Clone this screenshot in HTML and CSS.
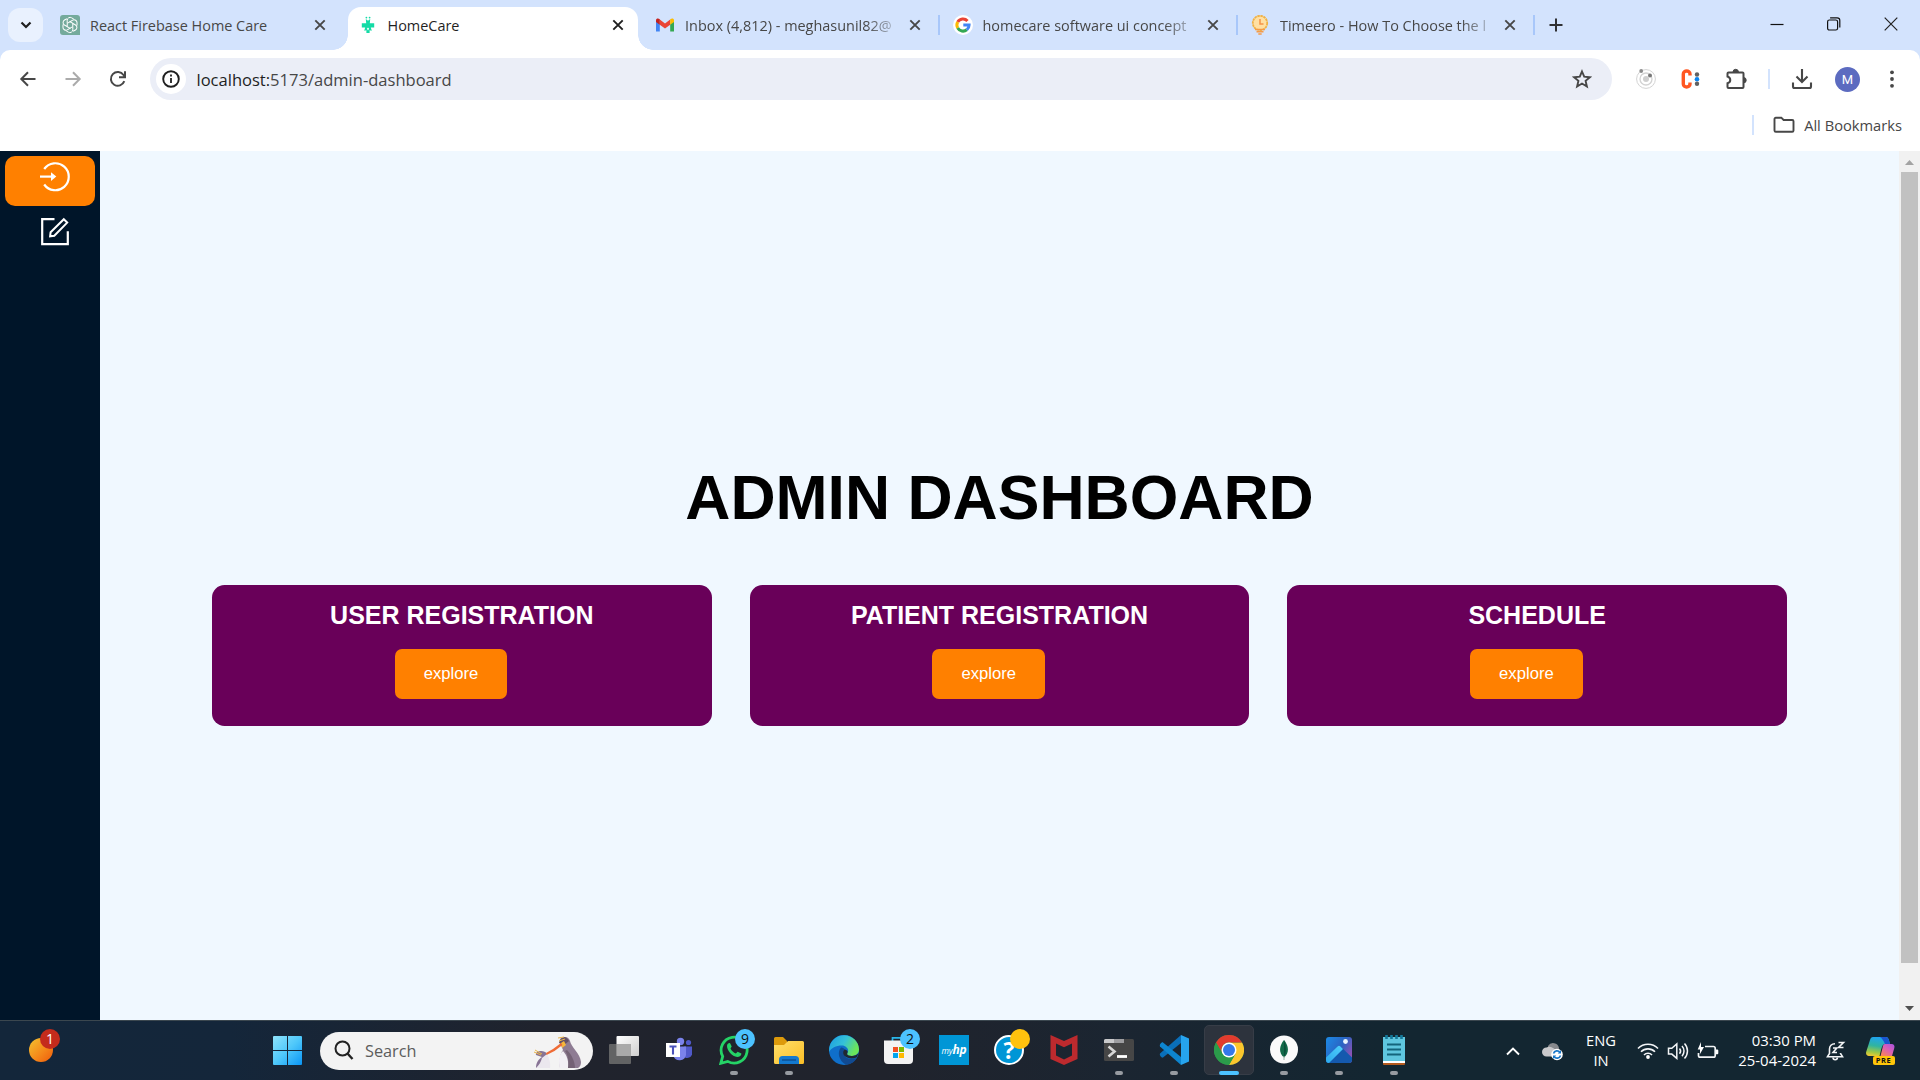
FILE: index.html
```html
<!DOCTYPE html>
<html lang="en">
<head>
<meta charset="utf-8">
<title>HomeCare</title>
<link rel="stylesheet" href="styles.css">
</head>
<body>
<svg class="defs" width="0" height="0">
  <defs>
    <symbol id="close" viewBox="0 0 20 20"><path d="M5.3 5.3l9.4 9.4M14.7 5.3l-9.4 9.4" stroke="currentColor" stroke-width="1.9" fill="none"/></symbol>
    <path id="petal" d="M10 6.800L7.200 8.400V5.200a2.900 2.900 0 0 1 4.400-2.400l2.300 1.400"/>
  </defs>
</svg>

<header class="tabstrip">
  <button class="tab-search"><svg width="12" height="12" viewBox="0 0 12 12"><path d="M1.5 3.5L6 8l4.500-4.500" fill="none" stroke="#1f1f1f" stroke-width="2.200"/></svg></button>
  <div class="tab">
    <svg class="favicon" viewBox="0 0 20 20"><path d="M3 0h14a3 3 0 0 1 3 3v17H3a3 3 0 0 1-3-3V3a3 3 0 0 1 3-3z" fill="#74aa9c"/><g fill="none" stroke="#fff" stroke-width="1"><use href="#petal"/><use href="#petal" transform="rotate(60 10 10)"/><use href="#petal" transform="rotate(120 10 10)"/><use href="#petal" transform="rotate(180 10 10)"/><use href="#petal" transform="rotate(240 10 10)"/><use href="#petal" transform="rotate(300 10 10)"/></g></svg>
    <span class="tab-title">React Firebase Home Care</span>
    <svg class="tab-close"><use href="#close"/></svg>
  </div>
  <div class="tab active">
    <svg class="favicon" viewBox="0 0 20 20"><g fill="#14dba6"><path d="M7.800 4L10 5.800 12.200 4l-.4 4.300h4.400v4.300h-3.400l1 3.100-2.200-.5v2.800H8.400v-2.800l-2.200.5 1-3.100H3.800V8.300h4.400z"/><circle cx="8.400" cy="2.600" r=".9"/><circle cx="11.600" cy="2.600" r=".9"/></g><path d="M10 12.500l1.100 1.300-1.100 1.700-1.100-1.700z" fill="#fff"/></svg>
    <span class="tab-title">HomeCare</span>
    <svg class="tab-close"><use href="#close"/></svg>
  </div>
  <div class="tab divided">
    <svg class="favicon" viewBox="0 0 20 20"><path d="M1 5v11.500h3.800V9z" fill="#4285f4"/><path d="M19 5v11.500h-3.800V9z" fill="#34a853"/><path d="M4.800 4.500L10 8.500l5.200-4v5.200L10 13.600 4.800 9.700z" fill="#ea4335"/><path d="M1 5.500C1 3.200 3.300 3 4.800 4.300v5.500L1 7z" fill="#c5221f"/><path d="M19 5.500c0-2.300-2.300-2.500-3.800-1.200v5.500L19 7z" fill="#fbbc04"/></svg>
    <span class="tab-title faded">Inbox (4,812) - meghasunil82@</span>
    <svg class="tab-close"><use href="#close"/></svg>
  </div>
  <div class="tab divided">
    <svg class="favicon" viewBox="0 0 20 20"><circle cx="10" cy="10" r="10" fill="#fff"/><g fill="none" stroke-width="3"><path d="M14.500 5.900A6.100 6.100 0 0 0 4.700 7" stroke="#ea4335"/><path d="M4.700 7a6.100 6.100 0 0 0 0 6" stroke="#fbbc05"/><path d="M4.700 13a6.100 6.100 0 0 0 9.100 1.800" stroke="#34a853"/><path d="M13.800 14.800A6.100 6.100 0 0 0 16.100 10H10.300" stroke="#4285f4"/></g></svg>
    <span class="tab-title faded">homecare software ui concept</span>
    <svg class="tab-close"><use href="#close"/></svg>
  </div>
  <div class="tab divided">
    <svg class="favicon" viewBox="0 0 20 20"><circle cx="10" cy="8" r="7.200" fill="#ffe0a3" stroke="#f0b145" stroke-width="1.800" stroke-dasharray="2.500 .6"/><path d="M10 4v5h3.500" fill="none" stroke="#f5924a" stroke-width="1.500"/><path d="M5 14.500h10M6.500 16.700h7M8.300 19h3.400" stroke="#f59b48" stroke-width="1.400"/></svg>
    <span class="tab-title faded">Timeero - How To Choose the l</span>
    <svg class="tab-close"><use href="#close"/></svg>
  </div>
  <svg class="new-tab" width="16" height="16" viewBox="0 0 16 16"><path d="M8 1.500v13M1.500 8h13" stroke="#303134" stroke-width="2"/></svg>
  <div class="window-controls">
    <svg width="14" height="14" viewBox="0 0 14 14"><path d="M.5 7.500h13" stroke="#111" stroke-width="1.200"/></svg>
    <svg width="14" height="14" viewBox="0 0 14 14"><g fill="none" stroke="#111" stroke-width="1.200"><rect x=".6" y="3" width="10" height="10" rx="1.800"/><path d="M3.100.8h7a2.700 2.700 0 0 1 2.700 2.700v7"/></g></svg>
    <svg width="14" height="14" viewBox="0 0 14 14"><path d="M.7.700l12.600 12.600M13.300.700L.7 13.300" stroke="#222" stroke-width="1.200"/></svg>
  </div>
</header>

<section class="browser-bars">
  <div class="toolbar">
    <nav class="history">
      <svg width="20" height="20" viewBox="0 0 20 20"><path d="M17.500 10H3.500M10 3.200L3.300 10l6.700 6.800" fill="none" stroke="#474747" stroke-width="2"/></svg>
      <svg width="20" height="20" viewBox="0 0 20 20"><path d="M2.500 10h14M10 3.200l6.700 6.800-6.700 6.800" fill="none" stroke="#ababab" stroke-width="2"/></svg>
      <svg width="20" height="20" viewBox="0 0 20 20"><path d="M16.300 12.200A6.900 6.900 0 1 1 15.500 6L17 7.800M17 2.200v6h-6" fill="none" stroke="#474747" stroke-width="2"/></svg>
    </nav>
    <div class="omnibox">
      <span class="site-info"><svg width="18" height="18" viewBox="0 0 18 18"><circle cx="9" cy="9" r="7.800" fill="none" stroke="#1f1f1f" stroke-width="1.900"/><path d="M9 4.500v2M9 8v5" stroke="#1f1f1f" stroke-width="1.800"/></svg></span>
      <span class="url"><b>localhost:</b>5173/admin-dashboard</span>
      <svg class="star" width="20" height="20" viewBox="0 0 20 20"><path d="M10 2.500l2.200 5.200 5.700.5-4.300 3.700 1.300 5.600L10 14.500l-4.900 3 1.300-5.600-4.300-3.700 5.700-.5z" fill="none" stroke="#474747" stroke-width="1.900"/></svg>
    </div>
    <div class="extensions">
      <svg width="20" height="20" viewBox="0 0 20 20"><g fill="none" stroke="#d3d3d3"><circle cx="10" cy="10" r="9.400"/><circle cx="10" cy="10" r="6" stroke-width="1.300"/></g><circle cx="10" cy="10" r="3" fill="#cfcfcf"/><circle cx="5.200" cy="2" r="1.900" fill="#8b8b8b"/><circle cx="14" cy="6.500" r="2" fill="#777"/></svg>
      <svg width="20" height="20" viewBox="0 0 20 20"><path d="M10 6.500V5c0-4-6.700-4-6.700 0v10c0 4 6.700 4 6.700 0v-1.500" fill="none" stroke="#ff5722" stroke-width="3.400"/><circle cx="17" cy="5.500" r="2.200" fill="#616161"/><circle cx="17" cy="10.200" r="2.300" fill="#0a84f0"/><circle cx="17" cy="14.700" r="2.200" fill="#616161"/></svg>
      <svg width="22" height="22" viewBox="0 0 22 22"><path d="M3.500 4.500h14a1 1 0 0 1 1 1v13.500a1 1 0 0 1-1 1h-14a1 1 0 0 1-1-1v-3.700c3.700-1.300 3.700-5.500 0-6.800v-3a1 1 0 0 1 1-1z" fill="none" stroke="#474747" stroke-width="2"/><path d="M8 4a2.700 2.700 0 0 1 5.400 0zM18.500 9.500a2.700 2.700 0 0 1 0 5.400z" fill="#474747" stroke="#474747"/></svg>
      <i class="bar-divider"></i>
      <svg width="22" height="22" viewBox="0 0 22 22"><path d="M11 1v13M5.500 8.500L11 14l5.500-5.500M2 14.500v4a1.500 1.500 0 0 0 1.500 1.500h15a1.500 1.500 0 0 0 1.500-1.500v-4" fill="none" stroke="#474747" stroke-width="2.100"/></svg>
      <span class="avatar">M</span>
      <svg width="20" height="20" viewBox="0 0 20 20" fill="#474747"><circle cx="10" cy="3.300" r="1.900"/><circle cx="10" cy="10" r="1.900"/><circle cx="10" cy="16.800" r="1.900"/></svg>
    </div>
  </div>
  <div class="bookmarks">
    <i class="bar-divider"></i>
    <svg width="22" height="18" viewBox="0 0 22 18"><path d="M1.500 3a1.300 1.300 0 0 1 1.300-1.300h5.500l2.300 2.300h8.600A1.300 1.300 0 0 1 20.500 5.300v9.200a1.300 1.300 0 0 1-1.300 1.300H2.800a1.300 1.300 0 0 1-1.300-1.300z" fill="none" stroke="#474747" stroke-width="1.900"/></svg>
    <span>All Bookmarks</span>
  </div>
</section>

<div class="page">
  <aside class="sidebar">
    <a class="side-item selected"><svg width="30" height="30" viewBox="0 0 30 30"><path d="M4.200 7A13.500 13.500 0 1 1 4.200 22.500" fill="none" stroke="#fff" stroke-width="2.200"/><path d="M0 14.600h12" stroke="#fff" stroke-width="2.200"/><path d="M11 10.300l5.300 4.300-5.300 4.300z" fill="#fff"/></svg></a>
    <a class="side-item"><svg width="30" height="30" viewBox="0 0 30 30"><path d="M14.500 2.200H2.200v25h25.600V14.200" fill="none" stroke="#fff" stroke-width="2.200"/><path d="M23.800 2.200l3.400 3.400L14.300 18.700l-4.200.6.500-4.100z" fill="none" stroke="#fff" stroke-width="2"/></svg></a>
  </aside>
  <main class="dashboard">
    <h1>ADMIN DASHBOARD</h1>
    <div class="cards">
      <section class="card"><h2>USER REGISTRATION</h2><button class="explore">explore</button></section>
      <section class="card"><h2>PATIENT REGISTRATION</h2><button class="explore">explore</button></section>
      <section class="card"><h2>SCHEDULE</h2><button class="explore">explore</button></section>
    </div>
  </main>
  <div class="scrollbar">
    <svg width="9" height="5" viewBox="0 0 9 5"><path d="M0 5l4.500-5L9 5z" fill="#a3a3a3"/></svg>
    <div class="thumb"></div>
    <svg width="9" height="5" viewBox="0 0 9 5"><path d="M0 0l4.500 5L9 0z" fill="#505050"/></svg>
  </div>
</div>

<footer class="taskbar">
  <div class="widgets">
    <svg width="24" height="24" viewBox="0 0 24 24"><defs><linearGradient id="sun" x1="0" y1="0" x2="1" y2="1"><stop offset="0" stop-color="#f2c230"/><stop offset=".55" stop-color="#f58a1a"/><stop offset="1" stop-color="#ee5a0c"/></linearGradient></defs><circle cx="12" cy="12" r="12" fill="url(#sun)"/></svg>
    <span class="badge red">1</span>
  </div>
  <svg class="start" width="29" height="29" viewBox="0 0 29 29"><defs><linearGradient id="win" x1="0" y1="0" x2="1" y2="1" ><stop offset="0" stop-color="#8fe3fb"/><stop offset=".5" stop-color="#4fc8fa"/><stop offset="1" stop-color="#0a95f5"/></linearGradient></defs><path d="M1 0h13v14H0V1a1 1 0 0 1 1-1zM15 0h13a1 1 0 0 1 1 1v13H15zM0 15h14v14H1a1 1 0 0 1-1-1zM15 15h14v13a1 1 0 0 1-1 1H15z" fill="url(#win)"/></svg>
  <div class="search">
    <svg width="20" height="20" viewBox="0 0 20 20"><circle cx="8.500" cy="8.500" r="7" fill="none" stroke="#222" stroke-width="2"/><path d="M13.500 13.500l5 5.500" stroke="#222" stroke-width="2.400"/></svg>
    <span>Search</span>
    <svg class="penguins" width="50" height="36" viewBox="0 0 50 36"><path d="M27 35c-1-8 0-14 3-18l-3-7c1-7 8-8 10-2 1 6 10 12 11 21 0 3-1 5-3 6z" fill="#8e7c93"/><path d="M27 35c-2-7-1-14 3-17 4 4 6 11 5 17z" fill="#f2eff5"/><path d="M34 17c5 5 8 12 8 18h-7c1-7 0-13-3-17z" fill="#746276"/><path d="M26 10c1-7 7-8 10-2l-5 4z" fill="#655267"/><path d="M28 10l3-2 2 4-4 3z" fill="#f5b83c"/><path d="M3 35c1-6 4-9 7-11l-7-2c0-4 8-6 11-1 2 4 4 9 3 14z" fill="#ebe7ee"/><path d="M3 35c0-6 3-9 6-11l-6-2c-1-4 8-6 11-1l-5 4c-1 4-3 7-6 10z" fill="#887495"/><path d="M13 20l7-4 8-6 1.500 2-8 6-8 4z" fill="#ef6b35"/><path d="M1 19l7 3M2 17l7 4" stroke="#ebb647"/><path d="M25 5l6-1M26 8l6-2" stroke="#e9b54b"/></svg>
  </div>
  <div class="apps">
    <div class="app"><svg width="30" height="30" viewBox="0 0 30 30"><defs><linearGradient id="tv" x1="0" y1="0" x2="1" y2="1"><stop offset="0" stop-color="#fff"/><stop offset="1" stop-color="#cfcfcf"/></linearGradient></defs><rect x="7.500" y="1" width="22.500" height="20" rx="1" fill="url(#tv)"/><rect y="9" width="22" height="20" rx="1" fill="#6f6f6f" fill-opacity=".85"/><path d="M7.500 9H22v12H7.500z" fill="#a9a9a9"/></svg></div>
    <div class="app"><svg width="30" height="30" viewBox="0 0 30 30"><circle cx="16.500" cy="6.500" r="3.700" fill="#7b83eb"/><circle cx="24.500" cy="7.500" r="2.600" fill="#5059c9"/><path d="M20 11.500h8v8a5 5 0 0 1-7 3z" fill="#5059c9"/><path d="M10 11.500h12V20a6.500 6.500 0 0 1-12.500 1z" fill="#7b83eb"/><rect x="2" y="8" width="14" height="14" fill="#fff"/><path d="M5.500 11.500h7M9 11.500v8" stroke="#4b53bc" stroke-width="2.100"/></svg></div>
    <div class="app running"><svg width="30" height="30" viewBox="0 0 30 30"><path d="M1.800 28.300l1.900-7A13 13 0 1 1 8.700 26.400z" fill="none" stroke="#25d366" stroke-width="2.800"/><path d="M8 11c0-2 1.700-3.300 3-3l1.700 3.600-1.200 1.800c1.200 2.400 3 4 5.400 5l1.700-1.700 3.800 1.800c0 2.200-1.800 3.500-4.200 3.500C13 21.500 8 15.500 8 11z" fill="#25d366"/></svg><span class="badge blue">9</span></div>
    <div class="app running"><svg width="30" height="30" viewBox="0 0 30 30"><defs><linearGradient id="fold" x1="0" y1="0" x2="1" y2="1"><stop offset="0" stop-color="#ffdf6b"/><stop offset="1" stop-color="#fbbe26"/></linearGradient></defs><path d="M0 3.500A1.500 1.500 0 0 1 1.500 2H9l4 4v5H0z" fill="#dd9a0b"/><path d="M0 10l10 0 4-4h14.500A1.500 1.500 0 0 1 30 7.500v20a1.500 1.500 0 0 1-1.500 1.500h-27A1.500 1.500 0 0 1 0 27.500z" fill="url(#fold)"/><path d="M5 29v-4.500A3.500 3.500 0 0 1 8.500 21h13a3.500 3.500 0 0 1 3.500 3.500V29z" fill="#1479cf"/><path d="M8 25h14" stroke="#0b4a8c" stroke-width="1.300"/></svg></div>
    <div class="app"><svg width="30" height="30" viewBox="0 0 30 30"><defs><linearGradient id="edge" x1="0" y1="0" x2="1" y2=".4"><stop offset="0" stop-color="#1b9de2"/><stop offset=".55" stop-color="#35c1d8"/><stop offset="1" stop-color="#6be65a"/></linearGradient></defs><circle cx="15" cy="15" r="15" fill="#0f6fca"/><path d="M.2 13A15 15 0 0 1 30 14c.2 4.500-3.300 7-7.500 7-3.700 0-5.500-1.400-4-3.200 2-3-1-7.300-5.700-7.300C7 10.500 2 13 .2 17z" fill="url(#edge)"/><path d="M12 12.500c-4 4.500-2.500 13 5 17.300 4.500-.2 9-3 10.800-7-4 2.200-9.800 1.500-12.300-2-1.700-2.400-1-4.700.7-5.800-1-1.800-2.700-2.700-4.200-2.500z" fill="#114a91"/><path d="M16 14.500c-2.300 1.200-2.500 4.500-.3 6.500 3 2.700 8.300 3.200 12.200 1.200l1.800-4.500c-2 3-7 4-10 2.800-1.300-.6-1.900-1.500-1.300-2.600.6-1 .3-2.800-2.400-3.400z" fill="#202832"/></svg></div>
    <div class="app"><svg width="30" height="30" viewBox="0 0 30 30"><path d="M8.500 8V2.800h13V8" fill="none" stroke="#29b6ea" stroke-width="1.700"/><path d="M0 5.500h29V25a4 4 0 0 1-4 4H4a4 4 0 0 1-4-4z" fill="#f3f3f3"/><path d="M9 12h5v5H9z" fill="#f25022"/><path d="M15 12h5v5h-5z" fill="#7fba00"/><path d="M9 18h5v5H9z" fill="#00a4ef"/><path d="M15 18h5v5h-5z" fill="#ffb900"/></svg><span class="badge blue">2</span></div>
    <div class="app"><span class="myhp">my<b>hp</b></span></div>
    <div class="app"><span class="help">?</span><span class="badge amber"></span></div>
    <div class="app"><svg width="30" height="30" viewBox="0 0 30 30"><path d="M1.500 0L15 6 28.500 0v24L15 30 1.500 24zM7 8.500v12l8 4 8-4v-12l-8 3.700z" fill="#bd2a2e" fill-rule="evenodd"/></svg></div>
    <div class="app running"><svg width="30" height="30" viewBox="0 0 30 30"><rect y="4" width="30" height="22" rx="1.500" fill="#464646"/><path d="M0 8V5.500A1.500 1.500 0 0 1 1.500 4H20v4z" fill="#c9c9cb"/><path d="M10 4h10v4H10z" fill="#9d9da0"/><path d="M4.500 11.500l6 5-6 5" fill="none" stroke="#d6d6d6" stroke-width="2.600"/><path d="M13 21.500h10" stroke="#fff" stroke-width="2.800"/></svg></div>
    <div class="app running"><svg width="30" height="30" viewBox="0 0 30 30"><path d="M1 18.500L22 0v8L4 22.500c-1 .8-4-2-3-4z" fill="#0a6fb9"/><path d="M1 11.500L22 30v-8L4 7.500c-1-.8-4 2-3 4z" fill="#0d85cf"/><path d="M22 0l8 3.500v23L22 30z" fill="#26a4ee"/></svg></div>
    <div class="app running focused"><svg width="30" height="30" viewBox="0 0 30 30"><circle cx="15" cy="15" r="15" fill="#2b9b4a"/><path d="M15 30A15 15 0 0 0 28 7.500H15l6.500 11.200z" fill="#fcc62d"/><path d="M2 7.500A15 15 0 0 1 28 7.500H15a7.500 7.500 0 0 0-6.500 11.300z" fill="#e33b2e"/><path d="M2 7.500l6.500 11.300A7.500 7.500 0 0 0 21.500 18.700L15 30A15 15 0 0 1 2 7.500z" fill="#2b9b4a"/><circle cx="15" cy="15" r="7.500" fill="#fff"/><circle cx="15" cy="15" r="6" fill="#3478ea"/></svg></div>
    <div class="app running"><svg width="30" height="30" viewBox="0 0 30 30"><circle cx="15" cy="14.500" r="14" fill="#fafafa"/><path d="M15 5c5 6 5.500 13 0 17.500-5.500-4.500-5-11.500 0-17.500z" fill="#126a49"/><path d="M15 5c2.500 6 2.500 12 0 18z" fill="#0b4f3a"/><path d="M14.500 21h1v4h-1z" fill="#9ab5a8"/></svg></div>
    <div class="app running"><svg width="30" height="30" viewBox="0 0 30 30"><defs><linearGradient id="ph" x1="0" y1="0" x2="1" y2=".6"><stop offset="0" stop-color="#1c8be6"/><stop offset=".6" stop-color="#2b63c2"/><stop offset="1" stop-color="#8b53b5"/></linearGradient><linearGradient id="hill" x1="0" y1="1" x2="1" y2="0"><stop offset="0" stop-color="#2da8ec"/><stop offset="1" stop-color="#4fd0fc"/></linearGradient></defs><rect x="2" y="2" width="26" height="26" rx="3" fill="url(#ph)"/><path d="M2 22.500l11.500-11a2 2 0 0 1 3 0L28 22.500V25a3 3 0 0 1-3 3H5a3 3 0 0 1-3-3z" fill="#1459ae"/><path d="M2 22.500l11.500-11a2 2 0 0 1 3 0L19 14 5 28a3 3 0 0 1-3-3z" fill="url(#hill)"/><circle cx="21.500" cy="6.500" r="2.400" fill="#eaf6ff"/></svg></div>
    <div class="app running"><svg width="30" height="30" viewBox="0 0 30 30"><path d="M4 26h22v3a1 1 0 0 1-1 1H5a1 1 0 0 1-1-1z" fill="#b45a1d"/><rect x="4" y="2" width="22" height="26" fill="#fff"/><rect x="4" y="2" width="22" height="24" fill="#5fc6df"/><path d="M8 9.500h14M8 14.500h14M8 19.500h14" stroke="#14647c" stroke-width="1.800"/><path d="M7.500 0v4M12.500 0v4M17.500 0v4M22.500 0v4" stroke="#14799a" stroke-width="2.600"/></svg></div>
  </div>
  <div class="tray">
    <svg class="caret" width="14" height="10" viewBox="0 0 14 10"><path d="M1 8.500l6-6 6 6" fill="none" stroke="#fff" stroke-width="1.900"/></svg>
    <svg class="cloud" width="22" height="20" viewBox="0 0 22 20"><path d="M6 5a6 6 0 0 1 11 2v5H6z" fill="#87898d"/><path d="M4.500 15.500a4.500 4.500 0 0 1 0-9C9 4 12 8 15 10v5.500z" fill="#c9c9cb"/><circle cx="15" cy="13.500" r="5.800" fill="#fff"/><path d="M11.500 12.500a3.600 3.600 0 0 1 6.500-1M18.500 14.500a3.600 3.600 0 0 1-6.500 1" fill="none" stroke="#1877c9" stroke-width="1.600"/><path d="M19 9v3.500h-3.300zM11 18v-3.500h3.300z" fill="#1877c9"/></svg>
    <div class="lang">ENG<br>IN</div>
    <svg class="wifi" width="22" height="18" viewBox="0 0 22 18"><g fill="none" stroke="#f3f5f7" stroke-width="1.600"><path d="M1 6.500a14 14 0 0 1 20 0"/><path d="M4 9.800a9.800 9.800 0 0 1 14 0"/><path d="M7 13a5.600 5.600 0 0 1 8 0"/></g><circle cx="11" cy="15" r="1.900" fill="#fff"/></svg>
    <svg class="volume" width="22" height="18" viewBox="0 0 22 18"><g fill="none" stroke="#f3f5f7" stroke-width="1.500"><path d="M1.500 6.300h3.300L9.800 2v14.400l-5-4.300H1.500z"/><path d="M12.500 6.500a4 4 0 0 1 0 5.200M15 4a7.500 7.500 0 0 1 0 10.200M17.500 1.500a11 11 0 0 1 0 15"/></g></svg>
    <svg class="battery" width="22" height="18" viewBox="0 0 22 18"><path d="M8 4.500h8.500A1.700 1.700 0 0 1 18.200 6.200v7.200a1.700 1.700 0 0 1-1.700 1.700H3.200A1.700 1.700 0 0 1 1.500 13.400V11" fill="none" stroke="#f3f5f7" stroke-width="1.700"/><path d="M19 7.500h1.300a1 1 0 0 1 1 1v2.700a1 1 0 0 1-1 1H19zM4 0v5h3l-4 7V7.500H.7z" fill="#fff"/></svg>
    <div class="clock">03:30 PM<br>25-04-2024</div>
    <svg class="bell" width="20" height="20" viewBox="0 0 20 20"><g fill="none" stroke="#f3f5f7" stroke-width="1.600"><path d="M9 2.700C5.500 2.700 3.500 5 3.500 8v4.500L1.500 15.700h15l-2-3.200V12"/><path d="M7 16.500a2.200 2.200 0 0 0 4.400 0"/><path d="M12.500 1.500h5l-5 5h5M7 7h3.800L7 11.500h4"/></g></svg>
    <div class="copilot">
      <svg width="30" height="30" viewBox="0 0 30 30"><defs><linearGradient id="cpa" x1=".4" y1="0" x2=".2" y2="1"><stop offset="0" stop-color="#1fa4ef"/><stop offset=".45" stop-color="#30b4a0"/><stop offset=".8" stop-color="#a4c942"/><stop offset="1" stop-color="#f1c934"/></linearGradient><linearGradient id="cpb" x1="1" y1="0" x2=".2" y2="1"><stop offset="0" stop-color="#a653e0"/><stop offset=".5" stop-color="#db5fb7"/><stop offset="1" stop-color="#f98459"/></linearGradient></defs><path d="M7 1h13c2 0 3 2 3.500 5l.5 2h-5c-2 0-3 2-4 6l-1.500 6H3c-2.500 0-3.500-2-2.700-4.500L4 4C4.500 2 5.500 1 7 1z" fill="url(#cpa)"/><path d="M14 1h6c2 0 3 3 4 7h-5c-2-4-3-6-5-7z" fill="#1b55cf"/><path d="M19 8h6.500c2.500 0 3.500 2 2.800 4L26 20H14.500l2-8c.5-2.500 1-4 2.500-4z" fill="url(#cpb)"/></svg>
      <span class="pre">PRE</span>
    </div>
  </div>
</footer>
</body>
</html>
```
FILE: styles.css
```css
* { box-sizing: border-box; }
body {
  margin: 0;
  width: 1920px;
  height: 1080px;
  display: flex;
  flex-direction: column;
  overflow: hidden;
  font-family: "Open Sans", "Noto Sans", sans-serif;
  background: #fff;
}
svg { display: block; flex: none; }
.defs { position: absolute; }
button { border: 0; padding: 0; font: inherit; }
h1, h2 { margin: 0; }

/* tab strip */
.tabstrip { height: 50px; flex: none; display: flex; background: #d3e3fd; }
.tab-search {
  width: 35px; height: 34px; margin: 8px 7px 0 8px;
  display: grid; place-items: center;
  border-radius: 12px; background: #e9f1fe;
}
.tab {
  width: 297.5px; height: 50px; flex: none;
  display: grid; grid-template-columns: 20px 210px 20px; column-gap: 10px;
  align-items: center; padding-left: 10px;
  color: #474747; position: relative;
}
.favicon { width: 20px; height: 20px; }
.tab-title {
  font-size: 14.450px; line-height: 20px; padding-top: 1px;
  white-space: nowrap;
}
.faded {
  -webkit-mask-image: linear-gradient(90deg, #000 86%, rgba(0, 0, 0, .25));
  mask-image: linear-gradient(90deg, #000 86%, rgba(0, 0, 0, .25));
}
.tab-close { width: 20px; height: 20px; }
.tab.active { color: #1f1f1f; z-index: 0; }
.tab.active::before {
  content: ""; position: absolute; z-index: -1;
  inset: 7px 7px 0 0; background: #fff; border-radius: 13px 13px 0 0;
}
.tab.active::after {
  content: ""; position: absolute; z-index: -1;
  left: -15px; right: -8px; bottom: 0; height: 15px;
  background:
    radial-gradient(circle at 0 0, transparent 14.5px, #fff 15px) left / 15px 15px no-repeat,
    radial-gradient(circle at 100% 0, transparent 14.5px, #fff 15px) right / 15px 15px no-repeat;
}
.divided::after {
  content: ""; position: absolute; left: 293px; top: 15px;
  width: 2px; height: 20px; background: #a8c7fa;
}
.new-tab { margin: 17px 0 0 10px; }
.window-controls { margin: 17px 22px 0 auto; display: flex; gap: 43px; }

/* toolbar and bookmarks */
.browser-bars { height: 101px; flex: none; background: linear-gradient(#d3e3fd 12px, #fff 12px); }
.toolbar {
  height: 58px; display: flex; align-items: center;
  background: #fff; border-radius: 10px 10px 0 0;
}
.history { display: flex; gap: 25px; padding: 0 22.500px 0 17.500px; }
.omnibox {
  width: 1462px; height: 42px; display: flex; align-items: center;
  border-radius: 21px; background: #ebeef7; padding: 0 20px 0 6px;
}
.site-info {
  width: 30px; height: 30px; border-radius: 50%; background: #fff;
  display: grid; place-items: center; margin-right: 10.500px;
}
.url { font-size: 16.550px; color: #474747; }
.url b { font-weight: 400; color: #1f1f1f; }
.star { margin-left: auto; }
.extensions { display: flex; align-items: center; padding-left: 23.500px; }
.extensions > :nth-child(2) { margin-left: 24px; }
.extensions > :nth-child(3) { margin-left: 25px; }
.extensions > :nth-child(4) { margin-left: 21px; }
.extensions > :nth-child(5) { margin-left: 21.400px; }
.extensions > :nth-child(6) { margin-left: 22px; }
.extensions > :nth-child(7) { margin-left: 22px; }
.bar-divider { width: 2px; height: 20px; background: #d3e3fd; }
.avatar {
  width: 25px; height: 25px; border-radius: 50%; background: #5c6bc0;
  color: #fff; font: 13px/25px Roboto, sans-serif; text-align: center;
}
.bookmarks {
  height: 34px; display: flex; align-items: center; justify-content: flex-end;
  padding-right: 18px; font-size: 14.700px; color: #474747;
}
.bookmarks span { margin-top: -1px; }
.bookmarks svg { margin: 0 9px 0 19px; }

/* application page */
.page { height: 869px; flex: none; display: flex; }
.sidebar {
  width: 100px; padding: 5px; background: #001529;
  display: flex; flex-direction: column; gap: 5px;
}
.side-item { height: 50px; padding: 6px 0 0 35px; border-radius: 10px; }
.side-item.selected { background: #ff8000; }
.dashboard {
  flex: 1; padding: 311px 112px 0; background: #f0f8ff;
  font-family: "Liberation Sans", Arial, sans-serif;
}
h1 { font-size: 62.500px; line-height: 70px; text-align: center; color: #000; }
.cards { display: grid; grid-template-columns: repeat(3, 1fr); gap: 38px; margin-top: 53px; }
.card {
  height: 141px; padding-top: 16px; border-radius: 12.500px; background: #690059;
  display: flex; flex-direction: column; align-items: center;
}
.card h2 { font-size: 25px; line-height: 28px; color: #fff; }
.explore {
  width: 112.500px; height: 50px; margin: 20px 21.500px 0 0;
  border-radius: 7px; background: #ff8000; color: #fff; font-size: 16.670px;
}
.scrollbar {
  width: 21px; background: #f1f1f1; padding: 9px 0;
  display: flex; flex-direction: column; align-items: center;
}
.thumb { width: 17px; height: 791px; margin: 7px 0 43px; background: #c1c1c1; }

/* taskbar */
.taskbar {
  height: 60px; flex: none; display: flex; align-items: center;
  border-top: 1px solid #3b474f; color: #fff;
  background: linear-gradient(90deg, #13263a 0, #14263a 12%, #20232d 28%, #20232c 46%, #1b2531 58%, #132631 72%, #132631 100%);
}
.widgets { width: 64px; height: 59px; padding: 17px 0 0 29px; position: relative; }
.badge {
  position: absolute; top: 8px; left: 28.500px;
  width: 20px; height: 20px; border-radius: 50%;
  font-size: 14px; line-height: 20px; text-align: center;
}
.widgets .badge { left: 40px; }
.red { background: #c42b1c; }
.blue { background: #4cc2ff; color: #111; }
.amber { background: #ffc20e; }
.start { margin: 0 18px 0 209px; }
.search {
  width: 273px; height: 38px; border-radius: 19px; background: #f3f3f3; color: #5c5c5c;
  display: flex; align-items: center; padding: 0 10px 0 14px; font-size: 16.300px;
}
.search svg:first-child { margin-top: -1px; }
.search span { margin-left: 11px; }
.penguins { margin-left: auto; }
.apps { display: flex; margin-left: 3.500px; }
.app { width: 55px; height: 59px; position: relative; display: flex; justify-content: center; padding-top: 14px; z-index: 0; }
.running::after {
  content: ""; position: absolute; left: 23.500px; bottom: 5px;
  width: 8px; height: 4px; border-radius: 2px; background: #979ba1;
}
.focused::before {
  content: ""; position: absolute; inset: 4px 2.500px 5px; z-index: -1;
  border: 1px solid #373d47; border-radius: 5px; background: #2d333d;
}
.focused::after { left: 17.500px; width: 20px; background: #4cc2ff; }
.myhp {
  width: 30px; height: 30px; background: #0096d6;
  font: italic 8.500px/29px "Open Sans", sans-serif; text-align: center; letter-spacing: -.2px;
}
.myhp b { font-size: 12px; }
.help {
  width: 30px; height: 30px; border: 2px solid #fff; border-radius: 50%; background: #0096d6;
  font: bold 23px/26px "Open Sans", sans-serif; text-align: center;
}
.tray { display: flex; align-items: center; margin-left: 84px; height: 59px; }
.cloud { margin-left: 22px; }
.lang, .clock { line-height: 20px; margin-top: -2px; }
.lang { width: 40px; margin-left: 17.500px; text-align: center; font-size: 14.700px; }
.wifi { margin-left: 15.500px; }
.volume { margin-left: 8px; }
.battery { margin-left: 8.500px; }
.clock { width: 90px; margin-left: 7px; text-align: right; font-size: 14.900px; }
.bell { margin-left: 10px; }
.copilot { position: relative; margin-left: 19.500px; height: 30px; }
.pre {
  position: absolute; left: 7px; top: 20px; width: 22px; height: 9px;
  border-radius: 2px; background: #ffc60a; color: #111;
  font: bold 7.500px/9px "Open Sans", sans-serif; letter-spacing: .5px; text-align: center;
}
```
